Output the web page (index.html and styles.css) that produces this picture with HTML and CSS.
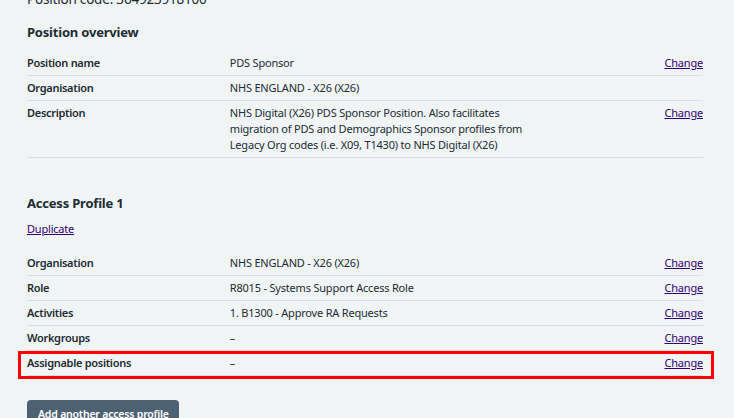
FILE: index.html
```html
<!DOCTYPE html>
<html lang="en">
<head>
<meta charset="utf-8">
<title>Position overview</title>
<link rel="stylesheet" href="styles.css">
</head>
<body>
<main class="page">
  <p class="code">Position code: 364923918100</p>
  <h2 class="heading">Position overview</h2>
  <dl class="summary summary--overview">
    <div class="row">
      <dt class="key">Position name</dt>
      <dd class="value">PDS Sponsor</dd>
      <dd class="actions"><a href="#" class="link">Change</a></dd>
    </div>
    <div class="row">
      <dt class="key">Organisation</dt>
      <dd class="value">NHS ENGLAND - X26 (X26)</dd>
      <dd class="actions"></dd>
    </div>
    <div class="row">
      <dt class="key">Description</dt>
      <dd class="value">NHS Digital (X26) PDS Sponsor Position. Also facilitates migration of PDS and Demographics Sponsor profiles from Legacy Org codes (i.e. X09, T1430) to NHS Digital (X26)</dd>
      <dd class="actions"><a href="#" class="link">Change</a></dd>
    </div>
  </dl>

  <h2 class="heading heading--profile">Access Profile 1</h2>
  <p class="duplicate"><a href="#" class="link">Duplicate</a></p>
  <dl class="summary summary--profile">
    <div class="row">
      <dt class="key">Organisation</dt>
      <dd class="value">NHS ENGLAND - X26 (X26)</dd>
      <dd class="actions"><a href="#" class="link">Change</a></dd>
    </div>
    <div class="row">
      <dt class="key">Role</dt>
      <dd class="value">R8015 - Systems Support Access Role</dd>
      <dd class="actions"><a href="#" class="link">Change</a></dd>
    </div>
    <div class="row">
      <dt class="key">Activities</dt>
      <dd class="value">1. B1300 - Approve RA Requests</dd>
      <dd class="actions"><a href="#" class="link">Change</a></dd>
    </div>
    <div class="row">
      <dt class="key">Workgroups</dt>
      <dd class="value">–</dd>
      <dd class="actions"><a href="#" class="link">Change</a></dd>
    </div>
    <div class="row row--highlight">
      <dt class="key">Assignable positions</dt>
      <dd class="value">–</dd>
      <dd class="actions"><a href="#" class="link">Change</a></dd>
    </div>
  </dl>

  <button class="button" type="button">Add another access profile</button>
</main>
</body>
</html>
```

FILE: styles.css
```css
html, body {
  margin: 0;
  padding: 0;
}

body {
  background: #f0f4f5;
  color: #212b32;
  font-family: "Noto Sans", "Open Sans", sans-serif;
  font-size: 11px;
  line-height: 16px;
  letter-spacing: -0.2px;
  overflow: hidden;
}

.page {
  width: 676px;
  padding-left: 27px;
}

.code {
  margin: -11px 0 0;
  font-size: 13.5px;
  line-height: 20px;
}

.heading {
  margin: 13px 0 9px;
  font-size: 13px;
  line-height: 20px;
  font-weight: 700;
}

.heading--profile {
  margin-top: 35px;
  margin-bottom: 8px;
}

.duplicate {
  margin: 0 0 14px;
}

.link {
  color: #330072;
  text-decoration: underline;
}

.summary {
  margin: 0;
}

.row {
  display: grid;
  grid-template-columns: 30% 50% 20%;
  border-bottom: 1px solid #d8dde0;
}

.row--highlight {
  position: relative;
}

.row--highlight::after {
  content: "";
  position: absolute;
  left: -9px;
  right: -11px;
  top: 0;
  bottom: -4px;
  border: 3px solid #ff0000;
  pointer-events: none;
}

.key,
.value,
.actions {
  margin: 0;
  padding: 4px 0;
}

.key {
  font-weight: 600;
  letter-spacing: -0.3px;
  padding-right: 24px;
}

.value {
  padding-right: 24px;
}

.actions {
  text-align: right;
}

.button {
  display: inline-block;
  margin-top: 24px;
  padding: 6px 10px 7px 11px;
  background: #4c6272;
  color: #ffffff;
  border: 0;
  border-radius: 4px;
  box-shadow: 0 2px 0 #263139;
  font-family: inherit;
  font-size: 10.5px;
  line-height: 16px;
  font-weight: 600;
  letter-spacing: -0.2px;
}
```
